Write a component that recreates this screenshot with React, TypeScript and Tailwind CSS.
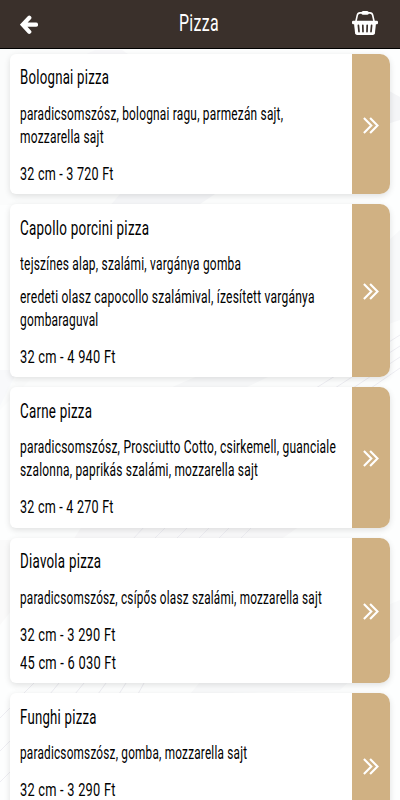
import { useLayoutEffect, useRef, useState } from "react";
import { clsx } from "clsx";

type TextLine = { text: string; width: number };

type Pizza = {
  name: TextLine;
  description: TextLine[][];
  prices: TextLine[];
};

const pizzas: Pizza[] = [
  {
    name: { text: "Bolognai pizza", width: 89.5 },
    description: [
      [
        { text: "paradicsomszósz, bolognai ragu, parmezán sajt,", width: 263.5 },
        { text: "mozzarella sajt", width: 84 },
      ],
    ],
    prices: [{ text: "32 cm - 3 720 Ft", width: 94 }],
  },
  {
    name: { text: "Capollo porcini pizza", width: 129.5 },
    description: [
      [{ text: "tejszínes alap, szalámi, vargánya gomba", width: 221 }],
      [
        {
          text: "eredeti olasz capocollo szalámival, ízesített vargánya",
          width: 294.5,
        },
        { text: "gombaraguval", width: 78.5 },
      ],
    ],
    prices: [{ text: "32 cm - 4 940 Ft", width: 96 }],
  },
  {
    name: { text: "Carne pizza", width: 72 },
    description: [
      [
        {
          text: "paradicsomszósz, Prosciutto Cotto, csirkemell, guanciale",
          width: 316,
        },
        { text: "szalonna, paprikás szalámi, mozzarella sajt", width: 238 },
      ],
    ],
    prices: [{ text: "32 cm - 4 270 Ft", width: 94 }],
  },
  {
    name: { text: "Diavola pizza", width: 81.5 },
    description: [
      [
        {
          text: "paradicsomszósz, csípős olasz szalámi, mozzarella sajt",
          width: 302,
        },
      ],
    ],
    prices: [
      { text: "32 cm - 3 290 Ft", width: 96 },
      { text: "45 cm - 6 030 Ft", width: 96.5 },
    ],
  },
  {
    name: { text: "Funghi pizza", width: 76.5 },
    description: [
      [{ text: "paradicsomszósz, gomba, mozzarella sajt", width: 227.5 }],
    ],
    prices: [
      { text: "32 cm - 3 290 Ft", width: 96 },
      { text: "45 cm - 6 030 Ft", width: 96.5 },
    ],
  },
];

// condenses a line of text so that it takes up the given width
const Condensed = ({
  text,
  width,
  className,
}: TextLine & { className?: string }) => {
  const ref = useRef<HTMLSpanElement>(null);
  const [scale, setScale] = useState(0.7);

  useLayoutEffect(() => {
    if (ref.current) setScale(width / ref.current.offsetWidth);
  }, [text, width]);

  return (
    <span className={clsx("block", className)} style={{ width }}>
      <span
        ref={ref}
        className="inline-block origin-left tracking-[0.018em] whitespace-nowrap"
        style={{ transform: `scaleX(${scale})` }}
      >
        {text}
      </span>
    </span>
  );
};

const BackIcon = () => (
  <svg width="18" height="20" viewBox="0 0 18 20" fill="none">
    <path
      d="M9.3 2.7L2.7 9.6L9.3 16.8M3.5 9.7H16"
      stroke="#fff"
      strokeWidth="4.2"
      strokeLinecap="round"
      strokeLinejoin="miter"
    />
  </svg>
);

const BasketIcon = () => (
  <svg width="26" height="24" viewBox="0 0 26 24" fill="none">
    <path
      d="M3.9 10.5L5.3 4.2Q5.8 2 8 1.9H18Q20.2 2 20.7 4.2L22.1 10.5"
      stroke="#fff"
      strokeWidth="1.6"
    />
    <rect x="9.5" y="0" width="7.2" height="3.8" rx="1.6" fill="#fff" />
    <rect x="0" y="9.8" width="26" height="3.5" rx="1.3" fill="#fff" />
    <path
      d="M2 12.5H24L22.9 22.3Q22.6 24 20.9 24H5.1Q3.4 24 3.1 22.3Z"
      fill="#fff"
    />
    <path
      d="M6.4 14.3L7 20.6M10.8 14.3L11 20.6M15.2 14.3L15 20.6M19.6 14.3L19 20.6"
      stroke="#3a302b"
      strokeWidth="1.7"
      strokeLinecap="round"
    />
  </svg>
);

const DoubleChevron = () => (
  <svg width="16" height="17" viewBox="0 0 16 17" fill="none">
    <path
      d="M0.9 1L8.3 8.5L0.9 16M7.1 1L14.5 8.5L7.1 16"
      stroke="#fff"
      strokeWidth="2.1"
    />
  </svg>
);

const Backdrop = () => (
  <svg
    className="absolute inset-0"
    width="400"
    height="800"
    viewBox="0 0 400 800"
    fill="none"
  >
    <path d="M90 49L130 54L250 160L170 205H0V380H30L0 410V49Z" fill="#fbfcfc" />
    <path d="M95 50H122L132 57H80Z" fill="#f8f8fa" />
    <path d="M400 97L384 88V125L400 120Z" fill="#f4f5f7" />
    <path d="M120 194H215L197 206H110Z" fill="#f6f7f9" />
    <path d="M400 320L345 340L245 388H170L280 340L400 230Z" fill="#f8f9fa" />
    <path d="M0 370H18L0 406Z" fill="#f8f9fb" />
    <path d="M82 526H300L280 540H73Z" fill="#f9f9fa" />
    <path d="M0 625L12 610V540H0Z" fill="#fafafa" />
    <path d="M400 635L340 690L190 694L200 682L400 600Z" fill="#f9fafb" />
    <path
      d="M316 388L400 335M335 388L400 346M353 388L400 357M371 388L400 368M133 539L144 527M154 539L166 527M176 539L188 527M198 539L210 527M218 539L230 527M240 539L252 527M23 694L34 683M50 694L59 683M75 694L84 683M98 694L106 683M119 694L126 683M138 694L144 683M0 718L10 708M0 751L10 741M0 782L10 772"
      stroke="#ededf2"
    />
  </svg>
);

const PizzaCard = ({ pizza }: { pizza: Pizza }) => (
  <li className="flex shrink-0 overflow-hidden rounded-[6px] rounded-r-[10px] bg-white shadow-[0_2px_6px_rgba(0,0,0,0.12)]">
    <div className="flex flex-1 flex-col px-2.5 pt-[10.5px] pb-[6.4px]">
      <h2>
        <Condensed {...pizza.name} className="text-[19.5px] leading-7" />
      </h2>
      <div className="mt-[10.3px] flex flex-col gap-2.5">
        {pizza.description.map((lines, i) => (
          <p key={i}>
            {lines.map((line) => (
              <Condensed
                key={line.text}
                {...line}
                className="text-[17.5px] leading-[23px]"
              />
            ))}
          </p>
        ))}
      </div>
      <div className="mt-[11.1px]">
        {pizza.prices.map((price) => (
          <Condensed
            key={price.text}
            {...price}
            className="text-[17.5px] leading-7"
          />
        ))}
      </div>
    </div>
    <button className="flex w-[38px] items-center justify-center bg-[#d0b183] pt-0.5 pr-px">
      <DoubleChevron />
    </button>
  </li>
);

const App = () => {
  return (
    <div className="relative flex h-[800px] w-[400px] flex-col overflow-hidden bg-[#fdfefe] text-black [font-family:Roboto,'Open_Sans',sans-serif]">
      <Backdrop />

      {/* HEADER */}
      <header className="relative flex h-[49px] shrink-0 items-center justify-between border-b border-black bg-[#3a302b] pr-[22px] pl-5 text-white">
        <button className="w-[26px] pt-[2px]">
          <BackIcon />
        </button>
        <h1 className="pb-0.5">
          <Condensed
            text="Pizza"
            width={40}
            className="text-[23.5px] leading-[45px]"
          />
        </h1>
        <button className="pb-0.5">
          <BasketIcon />
        </button>
      </header>

      {/* PIZZA LIST */}
      <ul className="relative flex flex-col gap-2.5 px-2.5 pt-[4.9px]">
        {pizzas.map((pizza) => (
          <PizzaCard key={pizza.name.text} pizza={pizza} />
        ))}
      </ul>
    </div>
  );
};

export default App;
